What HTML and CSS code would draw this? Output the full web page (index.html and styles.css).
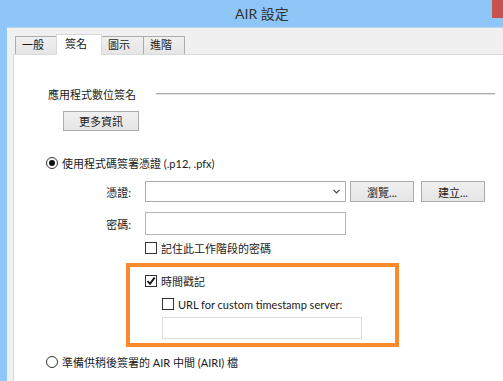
FILE: index.html
```html
<!DOCTYPE html>
<html lang="zh-Hant">
<head>
    <meta charset="UTF-8">
    <title>AIR 設定</title>
    <link rel="stylesheet" href="styles.css">
</head>
<body>
    <!-- Title Bar -->
    <div class="titlebar">
        <span class="title">AIR 設定</span>
        <span class="close"></span>
    </div>

    <!-- Dialog -->
    <div class="dialog">
        <div class="tabs">
            <div class="tab first">一般</div>
            <div class="tab active">簽名</div>
            <div class="tab">圖示</div>
            <div class="tab">進階</div>
        </div>

        <div class="panel">
            <div class="group-head">
                <span>應用程式數位簽名</span>
                <span class="rule"></span>
            </div>
            <button class="btn more">更多資訊</button>

            <label class="radio-row cert">
                <span class="radio checked"></span>使用程式碼簽署憑證 (.p12, .pfx)
            </label>

            <div class="form-row first-row">
                <span class="label">憑證:</span>
                <div class="select">
                    <svg width="7" height="5" viewBox="0 0 7 5"><polyline points="0.5,0.8 3.5,3.8 6.5,0.8" fill="none" stroke="#444" stroke-width="1.2"/></svg>
                </div>
                <button class="btn browse">瀏覽...</button>
                <button class="btn create">建立...</button>
            </div>
            <div class="form-row second-row">
                <span class="label">密碼:</span>
                <div class="input"></div>
            </div>
            <label class="check-row remember">
                <span class="check"></span>記住此工作階段的密碼
            </label>

            <!-- Highlighted timestamp settings -->
            <div class="highlight">
                <label class="check-row stamp">
                    <span class="check">
                        <svg width="10" height="10" viewBox="0 0 10 10"><polyline points="1.5,5 4,7.8 8.6,1.6" fill="none" stroke="#111" stroke-width="1.8"/></svg>
                    </span>時間戳記
                </label>
                <label class="check-row url">
                    <span class="check"></span>URL for custom timestamp server:
                </label>
                <div class="input url-input"></div>
            </div>

            <label class="radio-row airi">
                <span class="radio"></span>準備供稍後簽署的 AIR 中間 (AIRI) 檔
            </label>
        </div>
    </div>
</body>
</html>
```

FILE: styles.css
```css
* {
    margin: 0;
    padding: 0;
    box-sizing: border-box;
}
body {
    width: 503px;
    height: 381px;
    overflow: hidden;
    background: #8ec6f7;
    font-family: "Lato", "Noto Sans CJK TC", sans-serif;
    font-size: 11px;
    color: #1a1a1a;
}
/* Title Bar */
.titlebar {
    height: 27px;
    display: flex;
    align-items: flex-start;
}
.title {
    flex: 1;
    text-align: center;
    padding-left: 32px;
    line-height: 27px;
    font-size: 14px;
    color: #333;
}
.close {
    width: 11px;
    height: 18px;
    background: #c9504f;
}
/* Dialog body */
.dialog {
    margin-left: 7px;
    height: 354px;
    background: #f0f0f0;
    border-top: 1px solid #b4d6f3;
    padding: 6px 0 0 6px;
    display: flex;
    flex-direction: column;
}
.tabs {
    display: flex;
    align-items: flex-end;
    height: 20px;
    padding-left: 2px;
}
.tab {
    height: 18px;
    line-height: 16px;
    padding-left: 6px;
    border: 1px solid #acacac;
    border-bottom: none;
    background: linear-gradient(#f0f0f0, #e5e5e5);
    margin-left: -1px;
}
.tab.first {
    width: 42px;
    margin-left: 0;
}
.tab.active {
    width: 46px;
    height: 21px;
    margin-bottom: -1px;
    background: #fff;
    border-color: #d9d9d9;
    padding-left: 8px;
    line-height: 18px;
    position: relative;
    z-index: 1;
}
.tab:nth-child(3) {
    width: 43px;
}
.tab:nth-child(4) {
    width: 42px;
}
.panel {
    flex: 1;
    background: #fff;
    border-top: 1px solid #d9d9d9;
    border-left: 1px solid #d9d9d9;
    display: flex;
    flex-direction: column;
    align-items: flex-start;
}
.group-head {
    align-self: stretch;
    display: flex;
    align-items: center;
    height: 16px;
    margin-top: 31px;
    padding-left: 34px;
}
.rule {
    flex: 1;
    margin: 0 8px 0 20px;
    border-top: 1px solid #a9a9a9;
    border-bottom: 1px solid #e3e3e3;
}
.btn {
    height: 21px;
    border: 1px solid #acacac;
    background: linear-gradient(#f0f0f0, #e5e5e5);
    font-family: inherit;
    font-size: 11px;
    color: #1a1a1a;
}
.btn.more {
    width: 76px;
    height: 20px;
    margin: 9px 0 0 49px;
}
/* Radios and checkboxes */
.radio-row, .check-row {
    display: flex;
    align-items: center;
    height: 16px;
    white-space: pre;
}
.radio-row {
    padding-left: 32px;
}
.radio-row.cert {
    margin-top: 24px;
}
.radio-row.airi {
    margin-top: 7px;
}
.radio {
    width: 12px;
    height: 12px;
    border: 1px solid #333;
    border-radius: 50%;
    background: #fff;
    margin-right: 4px;
    display: flex;
    align-items: center;
    justify-content: center;
}
.radio.checked::after {
    content: "";
    width: 6px;
    height: 6px;
    border-radius: 50%;
    background: #111;
}
.check {
    width: 12px;
    height: 12px;
    border: 1px solid #333;
    background: #fff;
    margin-right: 4px;
    display: flex;
    align-items: center;
    justify-content: center;
}
.check-row {
    height: 14px;
    white-space: nowrap;
}
.radio-row {
    white-space: nowrap;
}
.check-row.remember {
    margin: 6px 0 0 131px;
}
/* Form rows */
.form-row {
    display: flex;
    align-items: center;
}
.form-row.first-row {
    margin-top: 10px;
    height: 21px;
}
.form-row.second-row {
    margin-top: 10px;
    height: 23px;
}
.label {
    width: 117px;
    text-align: right;
    margin-right: 14px;
}
.select {
    width: 201px;
    height: 21px;
    border: 1px solid #acacac;
    background: #fff;
    display: flex;
    align-items: center;
    justify-content: flex-end;
    padding-right: 5px;
}
.btn.browse {
    width: 64px;
    margin-left: 4px;
}
.btn.create {
    width: 64px;
    margin-left: 7px;
}
.input {
    width: 201px;
    height: 23px;
    border: 1px solid #b5b5b5;
    background: #fff;
}
/* Orange highlight box */
.highlight {
    margin: 8px 0 0 112px;
    width: 273px;
    height: 84px;
    border: 4px solid #fd8a2a;
    display: flex;
    flex-direction: column;
    align-items: flex-start;
}
.check-row.stamp {
    margin: 7px 0 0 15px;
}
.check-row.url {
    margin: 9px 0 0 32px;
}
.input.url-input {
    margin: 6px 0 0 32px;
    width: 200px;
    height: 22px;
    border-color: #dcdcdc;
}
```
